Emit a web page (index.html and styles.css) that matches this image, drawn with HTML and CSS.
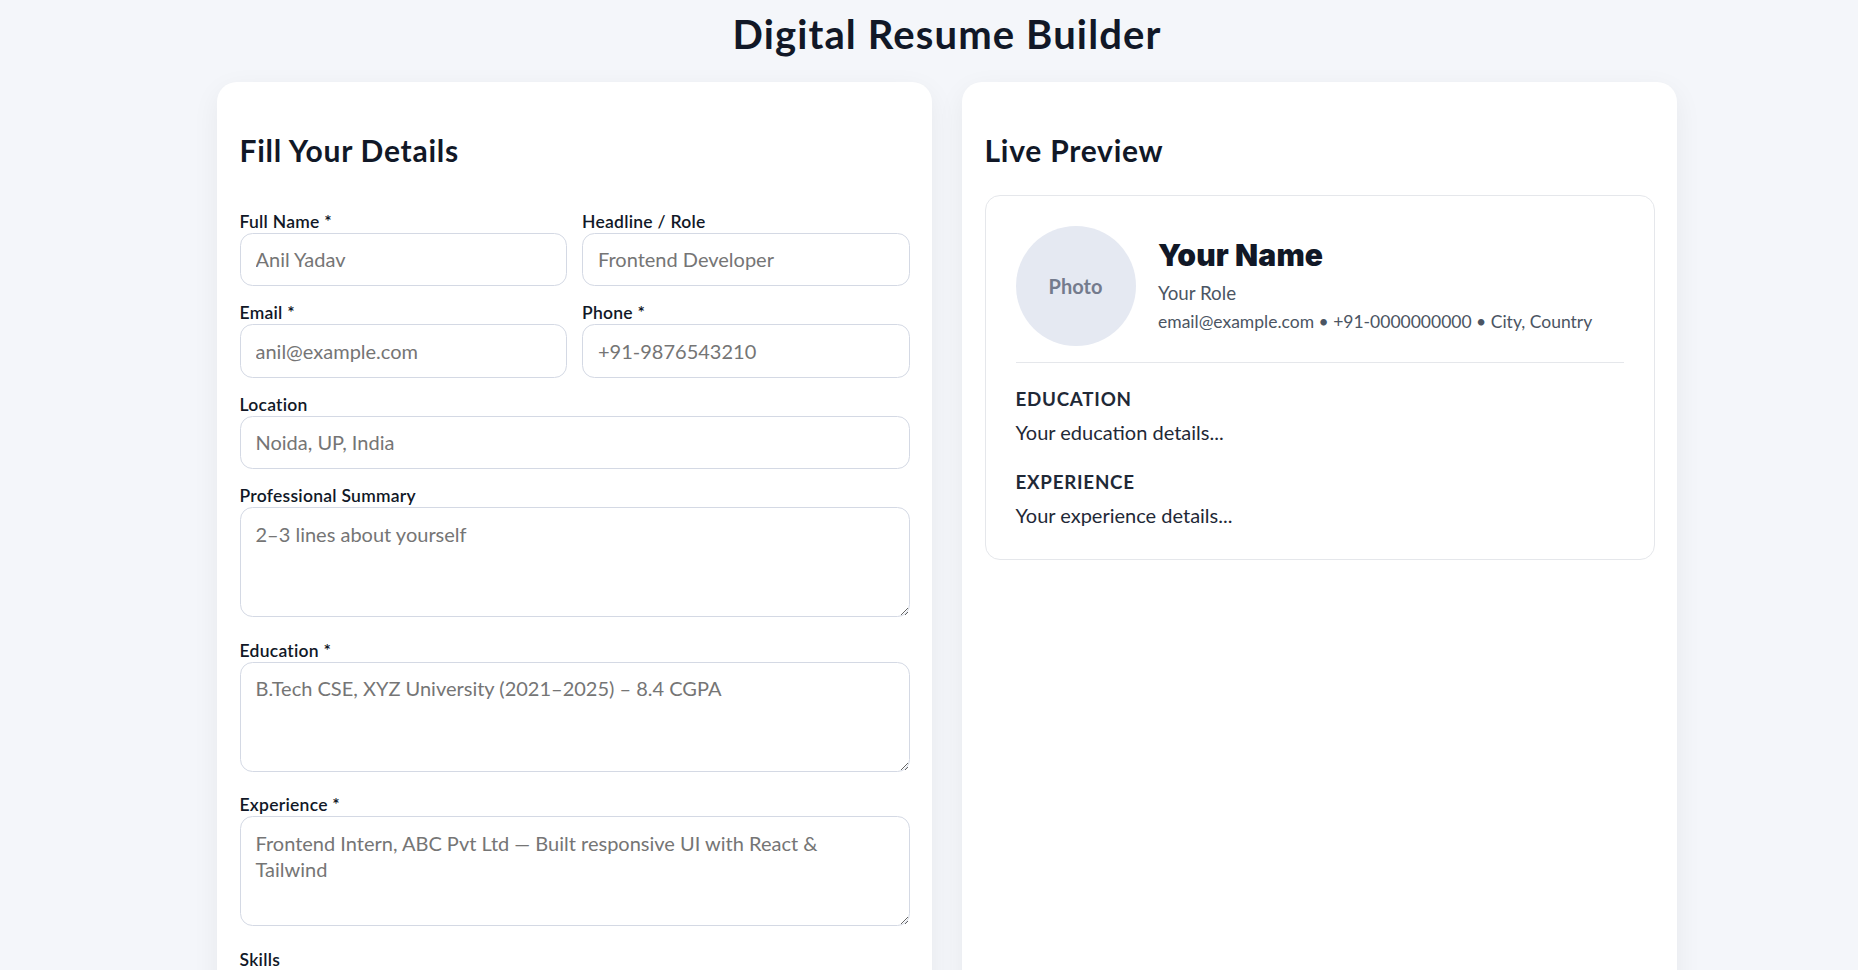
FILE: index.html
```html
<!DOCTYPE html>
<html lang="en">
<head>
<meta charset="utf-8">
<title>Digital Resume Builder</title>
<link rel="stylesheet" href="styles.css">
</head>
<body>
<div class="page">
  <h1 class="title">Digital Resume Builder</h1>
  <div class="layout">
    <section class="card">
      <h2 class="card-title">Fill Your Details</h2>
      <form class="form">
        <div class="row">
          <div class="field">
            <label class="label">Full Name *</label>
            <input class="input" type="text" placeholder="Anil Yadav">
          </div>
          <div class="field">
            <label class="label">Headline / Role</label>
            <input class="input" type="text" placeholder="Frontend Developer">
          </div>
        </div>
        <div class="row">
          <div class="field">
            <label class="label">Email *</label>
            <input class="input" type="email" placeholder="anil@example.com">
          </div>
          <div class="field">
            <label class="label">Phone *</label>
            <input class="input" type="tel" placeholder="+91-9876543210">
          </div>
        </div>
        <div class="field">
          <label class="label">Location</label>
          <input class="input" type="text" placeholder="Noida, UP, India">
        </div>
        <div class="field">
          <label class="label">Professional Summary</label>
          <textarea class="input area" placeholder="2–3 lines about yourself"></textarea>
        </div>
        <div class="field">
          <label class="label">Education *</label>
          <textarea class="input area" placeholder="B.Tech CSE, XYZ University (2021–2025) – 8.4 CGPA"></textarea>
        </div>
        <div class="field">
          <label class="label">Experience *</label>
          <textarea class="input area" placeholder="Frontend Intern, ABC Pvt Ltd — Built responsive UI with React &amp;&#10;Tailwind"></textarea>
        </div>
        <div class="field">
          <label class="label">Skills</label>
          <input class="input" type="text" placeholder="HTML, CSS, JavaScript, React">
        </div>
        <div class="field">
          <label class="label">Profile Photo</label>
          <input class="input" type="text" placeholder="Choose file">
        </div>
      </form>
    </section>
    <section class="card">
      <h2 class="card-title">Live Preview</h2>
      <div class="preview">
        <div class="pv-head">
          <div class="photo">Photo</div>
          <div class="pv-info">
            <h3 class="pv-name">Your Name</h3>
            <p class="pv-role">Your Role</p>
            <p class="pv-contact">email@example.com • +91-0000000000 • City, Country</p>
          </div>
        </div>
        <div class="pv-section">
          <h4 class="pv-heading">Education</h4>
          <p class="pv-text">Your education details...</p>
        </div>
        <div class="pv-section">
          <h4 class="pv-heading">Experience</h4>
          <p class="pv-text">Your experience details...</p>
        </div>
      </div>
    </section>
  </div>
</div>
</body>
</html>
```

FILE: styles.css
```css
* { box-sizing: border-box; }

body {
  margin: 0;
  background: #f4f6fa;
  font-family: Lato, "Open Sans", sans-serif;
  color: #111827;
}

.page {
  width: 1460px;
  margin-left: 217px;
  padding-top: 8.5px;
}

.title {
  margin: 0 0 23.5px;
  font-size: 40px;
  line-height: 50px;
  font-weight: 700;
  letter-spacing: 0.028em;
  text-align: center;
  color: #111827;
}

.layout {
  display: grid;
  grid-template-columns: 1fr 1fr;
  column-gap: 30px;
}

.card {
  background: #ffffff;
  border-radius: 20px;
  padding: 22.5px;
  box-shadow: 0 8px 28px rgba(15, 23, 42, 0.06);
}

.card-title {
  margin: 25px 0;
  font-size: 30px;
  line-height: 40px;
  font-weight: 700;
  letter-spacing: 0.025em;
  color: #111827;
}

.form {
  padding-bottom: 20px;
}

.row {
  display: grid;
  grid-template-columns: 1fr 1fr;
  column-gap: 15px;
}

.field {
  display: flex;
  flex-direction: column;
  margin-top: 16px;
}

.label {
  display: block;
  font-size: 17.5px;
  line-height: 22px;
  font-weight: 600;
  letter-spacing: 0.015em;
  color: #111827;
}

.input {
  display: block;
  width: 100%;
  margin: 0;
  font-family: inherit;
  font-size: 20px;
  line-height: 26.5px;
  padding: 12.5px 15px;
  border: 1.25px solid #d4d9e4;
  border-radius: 12.5px;
  background: #ffffff;
  color: #111827;
  outline: none;
}

.input::placeholder {
  color: #757575;
  opacity: 1;
}

.area {
  height: 110px;
  resize: vertical;
  margin-bottom: 6.5px;
}

.preview {
  border: 1.25px solid #e5e7eb;
  border-radius: 15px;
  padding: 30px;
}

.pv-head {
  display: flex;
  align-items: center;
  gap: 22.5px;
  padding-bottom: 16.5px;
  border-bottom: 1.25px solid #e5e7eb;
}

.photo {
  flex: none;
  width: 120px;
  height: 120px;
  border-radius: 50%;
  background: #e5e9f2;
  display: flex;
  align-items: center;
  justify-content: center;
  font-size: 20px;
  line-height: 1;
  font-weight: 700;
  color: #747b8d;
}

.pv-name {
  margin: 0;
  font-family: Inter, Lato, sans-serif;
  font-size: 30px;
  line-height: 36px;
  font-weight: 900;
  letter-spacing: 0.005em;
  color: #111827;
}

.pv-role {
  margin: 6.8px 0 0;
  font-size: 18.75px;
  line-height: 25px;
  color: #4b5563;
}

.pv-contact {
  margin: 3.5px 0 0;
  font-size: 17.5px;
  line-height: 25px;
  color: #4b5563;
}

.pv-section {
  margin-top: 23.5px;
}

.pv-heading {
  margin: 0;
  font-size: 18.75px;
  line-height: 24px;
  font-weight: 700;
  letter-spacing: 0.04em;
  text-transform: uppercase;
  color: #1f2937;
}

.pv-text {
  margin: 7.5px 0 0;
  font-size: 20px;
  line-height: 28px;
  color: #1f2937;
}
```
